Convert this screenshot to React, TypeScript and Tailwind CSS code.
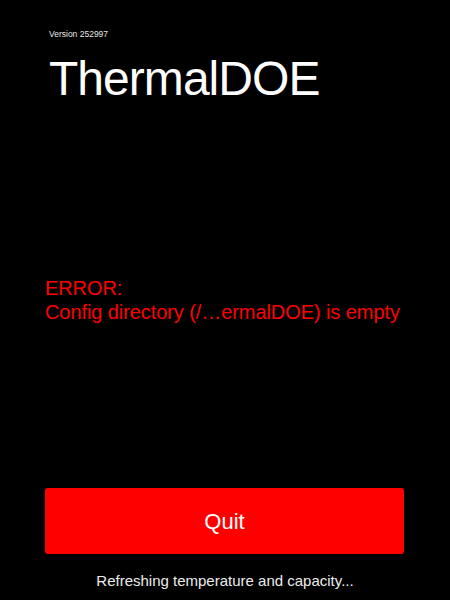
import React from 'react'

const font = { fontFamily: '"Liberation Sans", Arial, sans-serif' }

export default function App() {
  return (
    <div className="w-[450px] h-[600px] bg-black overflow-hidden px-[45px] pt-[29px] text-white" style={font}>
      <header className="pl-[4px]">
        <div className="text-[8.5px] leading-[10px] text-[#e6e6e6]">Version 252997</div>
        <h1 className="mt-[16px] text-[48px] leading-[48px] tracking-[-0.02em] font-normal">ThermalDOE</h1>
      </header>

      <div className="mt-[173px] text-[20px] leading-[24px] tracking-[-0.004em] text-[#ff0000]">
        <div>ERROR:</div>
        <div>Config directory (/…ermalDOE) is empty</div>
      </div>

      <button className="mt-[164px] w-[359px] h-[66px] rounded-[3px] bg-[#ff0000] text-white text-[22px] flex items-center justify-center">
        Quit
      </button>

      <p className="mt-[18px] text-center text-[15px] leading-[18px] text-[#ececec]">
        Refreshing temperature and capacity...
      </p>
    </div>
  )
}
